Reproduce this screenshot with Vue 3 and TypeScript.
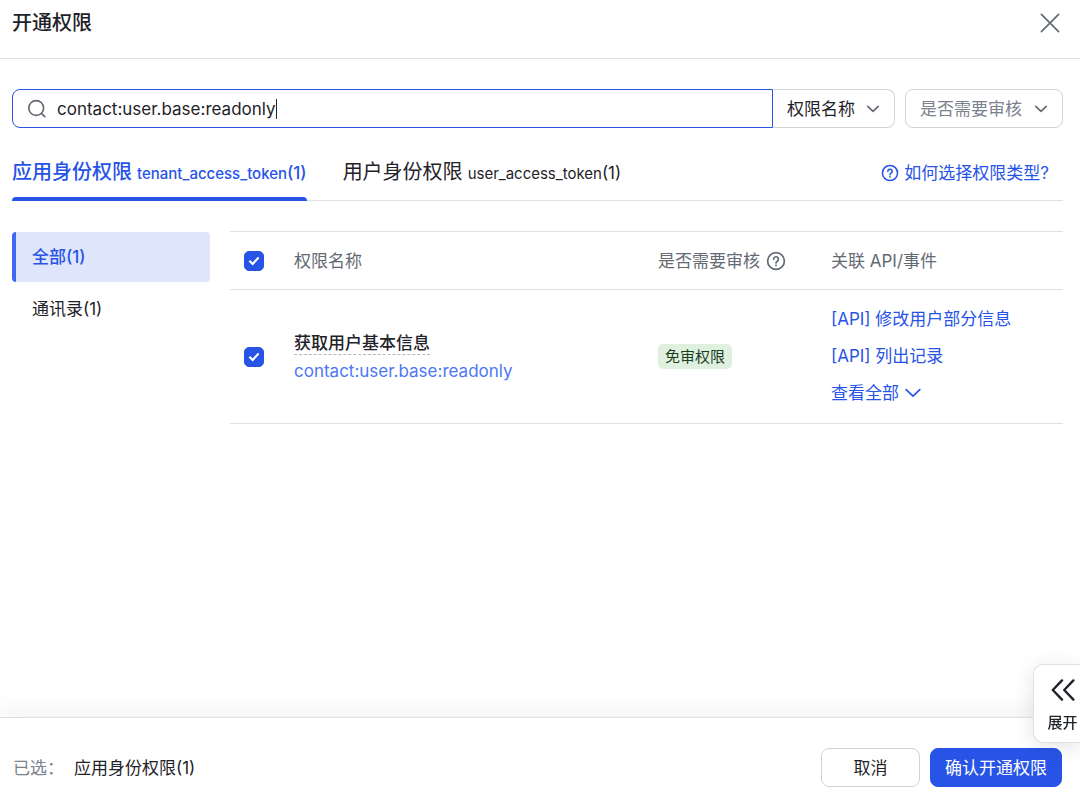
<script setup lang="ts">
import { computed, ref } from 'vue'

interface ApiLink {
  id: string
  name: string
}

interface Permission {
  name: string
  scope: string
  badge: string
  apis: ApiLink[]
}

const keyword = ref<string>('contact:user.base:readonly')
const searchField = ref<string>('name')
const review = ref<string>('')
const activeTab = ref<string>('tenant')
const activeCategory = ref<string>('all')

const tabs = [
  { id: 'tenant', label: '应用身份权限', token: 'tenant_access_token', count: 1 },
  { id: 'user', label: '用户身份权限', token: 'user_access_token', count: 1 },
]

const categories = [
  { id: 'all', label: '全部', count: 1 },
  { id: 'contact', label: '通讯录', count: 1 },
]

const permissions: Permission[] = [
  {
    name: '获取用户基本信息',
    scope: 'contact:user.base:readonly',
    badge: '免审权限',
    apis: [
      { id: 'patch', name: '[API] 修改用户部分信息' },
      { id: 'list', name: '[API] 列出记录' },
    ],
  },
]

const selected = ref<string[]>(permissions.map((p) => p.scope))
const allSelected = computed<boolean>({
  get: () => selected.value.length === permissions.length,
  set: (on) => {
    selected.value = on ? permissions.map((p) => p.scope) : []
  },
})
</script>

<template>
  <div class="dialog" role="dialog" aria-labelledby="dialog-title">
    <header class="head">
      <h1 id="dialog-title">开通权限</h1>
      <button class="close" type="button" aria-label="关闭">
        <svg viewBox="0 0 20 20" width="20" height="20"><path d="M1.4 1.4 18.6 18.6M18.6 1.4 1.4 18.6" /></svg>
      </button>
    </header>

    <main class="body">
      <div class="filters">
        <div class="search-group">
          <label class="search">
            <svg class="search-icon" viewBox="0 0 20 20" width="20" height="20">
              <circle cx="9.2" cy="9" r="7.4" />
              <path d="m14.6 14.6 3.2 3" />
            </svg>
            <input v-model="keyword" type="text" aria-label="搜索权限" />
            <span class="caret"></span>
          </label>
          <div class="select field">
            <select v-model="searchField" aria-label="搜索字段">
              <option value="name">权限名称</option>
            </select>
            <svg viewBox="0 0 14 14" width="14" height="14"><path d="m1.8 4.4 5.2 5 5.2-5" /></svg>
          </div>
        </div>
        <div class="select review">
          <select v-model="review" aria-label="是否需要审核">
            <option value="">是否需要审核</option>
          </select>
          <svg viewBox="0 0 14 14" width="14" height="14"><path d="m1.8 4.4 5.2 5 5.2-5" /></svg>
        </div>
      </div>

      <div class="tabs">
        <div class="tab-list" role="tablist">
          <button
            v-for="tab in tabs"
            :key="tab.id"
            class="tab"
            :class="{ active: tab.id === activeTab }"
            type="button"
            role="tab"
            :aria-selected="tab.id === activeTab"
            @click="activeTab = tab.id"
          >
            <span>{{ tab.label }}</span>
            <span class="token"><small>{{ tab.token }}</small>({{ tab.count }})</span>
          </button>
        </div>
        <a class="help" href="#">
          <svg class="question" viewBox="0 0 20 20" width="18" height="18">
            <circle cx="10" cy="10" r="8.4" />
            <path d="M7.6 8.2a2.4 2.4 0 1 1 3.7 2c-.9.6-1.3.9-1.3 1.7" />
            <path d="M10 14v.4" />
          </svg>
          如何选择权限类型?
        </a>
      </div>

      <div class="content">
        <nav class="side" aria-label="权限分类">
          <button
            v-for="cat in categories"
            :key="cat.id"
            class="cat"
            :class="{ active: cat.id === activeCategory }"
            type="button"
            @click="activeCategory = cat.id"
          >
            {{ cat.label }}({{ cat.count }})
          </button>
        </nav>

        <table>
          <colgroup>
            <col class="col-check" />
            <col />
            <col class="col-review" />
            <col class="col-api" />
          </colgroup>
          <thead>
            <tr>
              <th class="check-cell">
                <label class="check">
                  <input v-model="allSelected" type="checkbox" aria-label="全选" />
                  <svg viewBox="0 0 20 20" width="20" height="20"><path d="m5.4 9.8 3.2 3.2 6-6.4" /></svg>
                </label>
              </th>
              <th scope="col">权限名称</th>
              <th scope="col">
                <span class="th-inner">
                  是否需要审核
                  <svg class="question" viewBox="0 0 20 20" width="20" height="20">
                    <circle cx="10" cy="10" r="8.4" />
                    <path d="M7.6 8.2a2.4 2.4 0 1 1 3.7 2c-.9.6-1.3.9-1.3 1.7" />
                    <path d="M10 14v.4" />
                  </svg>
                </span>
              </th>
              <th scope="col">关联 API/事件</th>
            </tr>
          </thead>
          <tbody>
            <tr v-for="item in permissions" :key="item.scope">
              <td class="check-cell">
                <label class="check">
                  <input v-model="selected" :value="item.scope" type="checkbox" :aria-label="item.name" />
                  <svg viewBox="0 0 20 20" width="20" height="20"><path d="m5.4 9.8 3.2 3.2 6-6.4" /></svg>
                </label>
              </td>
              <td>
                <div class="perm">
                  <span class="perm-name">{{ item.name }}</span>
                  <span class="perm-scope">{{ item.scope }}</span>
                </div>
              </td>
              <td><span class="badge">{{ item.badge }}</span></td>
              <td>
                <div class="apis">
                  <a v-for="api in item.apis" :key="api.id" href="#">{{ api.name }}</a>
                  <button class="more" type="button">
                    查看全部
                    <svg viewBox="0 0 16 16" width="16" height="16"><path d="m1.2 4.6 6.8 6.6 6.8-6.6" /></svg>
                  </button>
                </div>
              </td>
            </tr>
          </tbody>
        </table>
      </div>
    </main>

    <footer class="foot">
      <span class="foot-label">已选：</span>
      <span class="foot-value">应用身份权限({{ selected.length }})</span>
      <div class="actions">
        <button class="btn" type="button">取消</button>
        <button class="btn primary" type="button">确认开通权限</button>
      </div>
    </footer>

    <button class="expand" type="button">
      <svg viewBox="0 0 24 22" width="24" height="22"><path d="M11 1.4 1.8 11l9.2 9.6M22.4 1.4 13.2 11l9.2 9.6" /></svg>
      <span>展开</span>
    </button>
  </div>
</template>

<style>
body {
  margin: 0;
  background: #fff;
}
</style>

<style scoped>
.dialog {
  --blue: #2754e6;
  --ink: #1f2329;
  --grey: #646a73;
  --line: #dee0e3;
  box-sizing: border-box;
  display: flex;
  flex-direction: column;
  min-height: 100vh;
  color: var(--ink);
  font: 17px/24px Inter, "Noto Sans CJK SC", sans-serif;
}
.dialog * {
  box-sizing: border-box;
}
svg {
  flex: none;
  fill: none;
  stroke: currentColor;
  stroke-width: 1.7;
  stroke-linecap: round;
  stroke-linejoin: round;
}
button,
input,
select {
  margin: 0;
  padding: 0;
  border: 0;
  background: none;
  color: inherit;
  font: inherit;
}
button {
  cursor: pointer;
}
a {
  color: var(--blue);
  text-decoration: none;
}

.head {
  display: flex;
  align-items: center;
  justify-content: space-between;
  padding: 8px 20px 20px 12px;
  border-bottom: 1px solid var(--line);
}
h1 {
  margin: 0;
  font-size: 20px;
  line-height: 30px;
  font-weight: 500;
}
.close {
  display: flex;
  color: var(--grey);
}

.body {
  flex: 1;
  padding: 30px 17px 30px 12px;
}
.filters {
  display: flex;
  gap: 10px;
}
.search-group {
  display: flex;
  flex: 1;
}
.search {
  display: flex;
  flex: 1;
  align-items: center;
  height: 39px;
  padding: 0 14px;
  border: 1px solid var(--blue);
  border-radius: 8px 0 0 8px;
}
.search-icon {
  margin-right: 10px;
  color: var(--grey);
}
.search input {
  min-width: 4px;
  outline: 0;
  field-sizing: content;
  caret-color: transparent;
}
.caret {
  width: 1px;
  height: 20px;
  background: var(--ink);
}
.select {
  position: relative;
  height: 39px;
  border: 1px solid #d0d3d6;
  border-radius: 8px;
}
.select select {
  width: 100%;
  height: 100%;
  padding: 0 14px;
  appearance: none;
}
.select svg {
  position: absolute;
  top: 12px;
  right: 14px;
  color: var(--grey);
  pointer-events: none;
}
.field {
  width: 122px;
  border-left: 0;
  border-radius: 0 8px 8px 0;
}
.review {
  width: 158px;
  color: #7c828c;
}

.tabs {
  display: flex;
  justify-content: space-between;
  margin-top: 20px;
  border-bottom: 1px solid var(--line);
}
.tab-list {
  display: flex;
  gap: 36px;
}
.tab {
  position: relative;
  display: flex;
  align-items: baseline;
  gap: 5px;
  padding: 10px 0 12px;
  font-size: 20px;
  line-height: 29px;
}
.token {
  font-size: 17px;
}
.token small {
  font-size: 15px;
}
.tab.active {
  color: var(--blue);
  font-weight: 500;
}
.tab.active::after {
  position: absolute;
  right: 0;
  bottom: -1px;
  left: 0;
  height: 4px;
  border-radius: 4px 4px 0 0;
  background: var(--blue);
  content: "";
}
.help {
  display: flex;
  align-items: center;
  gap: 5px;
  padding: 0 14px 2px 0;
}

.content {
  display: flex;
  align-items: flex-start;
  gap: 20px;
  margin-top: 30px;
}
.side {
  display: flex;
  flex: none;
  flex-direction: column;
  gap: 2px;
  width: 198px;
  padding-top: 1px;
}
.cat {
  height: 50px;
  padding-left: 16px;
  border-left: 4px solid transparent;
  border-radius: 4px;
  text-align: left;
}
.cat.active {
  border-color: #3f69ee;
  background: #dfe5fb;
  color: var(--blue);
  font-weight: 500;
}

table {
  flex: 1;
  width: 100%;
  border-top: 1px solid var(--line);
  border-spacing: 0;
  table-layout: fixed;
}
.col-check {
  width: 64px;
}
.col-review {
  width: 173px;
}
.col-api {
  width: 232px;
}
th,
td {
  padding: 0;
  border-bottom: 1px solid var(--line);
  text-align: left;
}
th {
  height: 58px;
  color: var(--grey);
  font-weight: 400;
}
.th-inner {
  display: flex;
  align-items: center;
  gap: 6px;
}
.check-cell {
  padding-left: 14px;
}
.check {
  position: relative;
  display: flex;
  width: 20px;
  height: 20px;
}
.check input {
  width: 20px;
  height: 20px;
  border: 1px solid #8f959e;
  border-radius: 5px;
  appearance: none;
}
.check input:checked {
  border-color: var(--blue);
  background: var(--blue);
}
.check svg {
  position: absolute;
  top: 0;
  left: 0;
  color: #fff;
  stroke-width: 2.2;
  stroke-linecap: butt;
  stroke-linejoin: miter;
  pointer-events: none;
}
.perm {
  display: flex;
  flex-direction: column;
  align-items: flex-start;
  gap: 5px;
}
.perm-name {
  border-bottom: 1px dashed #b4b8be;
  line-height: 22px;
  font-weight: 500;
}
.perm-scope {
  color: #4c77f5;
  line-height: 22px;
}
.badge {
  display: inline-block;
  padding: 0 7px;
  border-radius: 5px;
  background: #dff0df;
  color: #1b3d1f;
  font-size: 15px;
  line-height: 25px;
}
.apis {
  display: flex;
  flex-direction: column;
  align-items: flex-start;
  gap: 13px;
  padding: 17px 0 18px;
}
.more {
  display: flex;
  align-items: center;
  gap: 6px;
  color: var(--blue);
}

.foot {
  display: flex;
  align-items: center;
  padding: 30px 18px 9px 13px;
  border-top: 1px solid var(--line);
  box-shadow: 0 -6px 24px rgba(31, 35, 41, 0.06);
}
.foot-label {
  width: 61px;
  color: #7c828c;
}
.actions {
  display: flex;
  gap: 10px;
  margin-left: auto;
}
.btn {
  min-width: 99px;
  height: 39px;
  padding: 0 14px;
  border: 1px solid #d0d3d6;
  border-radius: 8px;
  background: #fff;
}
.btn.primary {
  border-color: var(--blue);
  background: var(--blue);
  color: #fff;
}

.expand {
  position: fixed;
  right: 0;
  bottom: 53px;
  display: flex;
  flex-direction: column;
  align-items: center;
  gap: 11px;
  width: 47px;
  padding: 14px 2px 8px 13px;
  border: 1px solid var(--line);
  border-right: 0;
  border-radius: 10px 0 0 10px;
  background: #fff;
  box-shadow: 0 4px 20px rgba(31, 35, 41, 0.12);
  font-size: 15px;
  line-height: 22px;
  font-weight: 500;
}
.expand svg {
  stroke-width: 2.4;
}
</style>
